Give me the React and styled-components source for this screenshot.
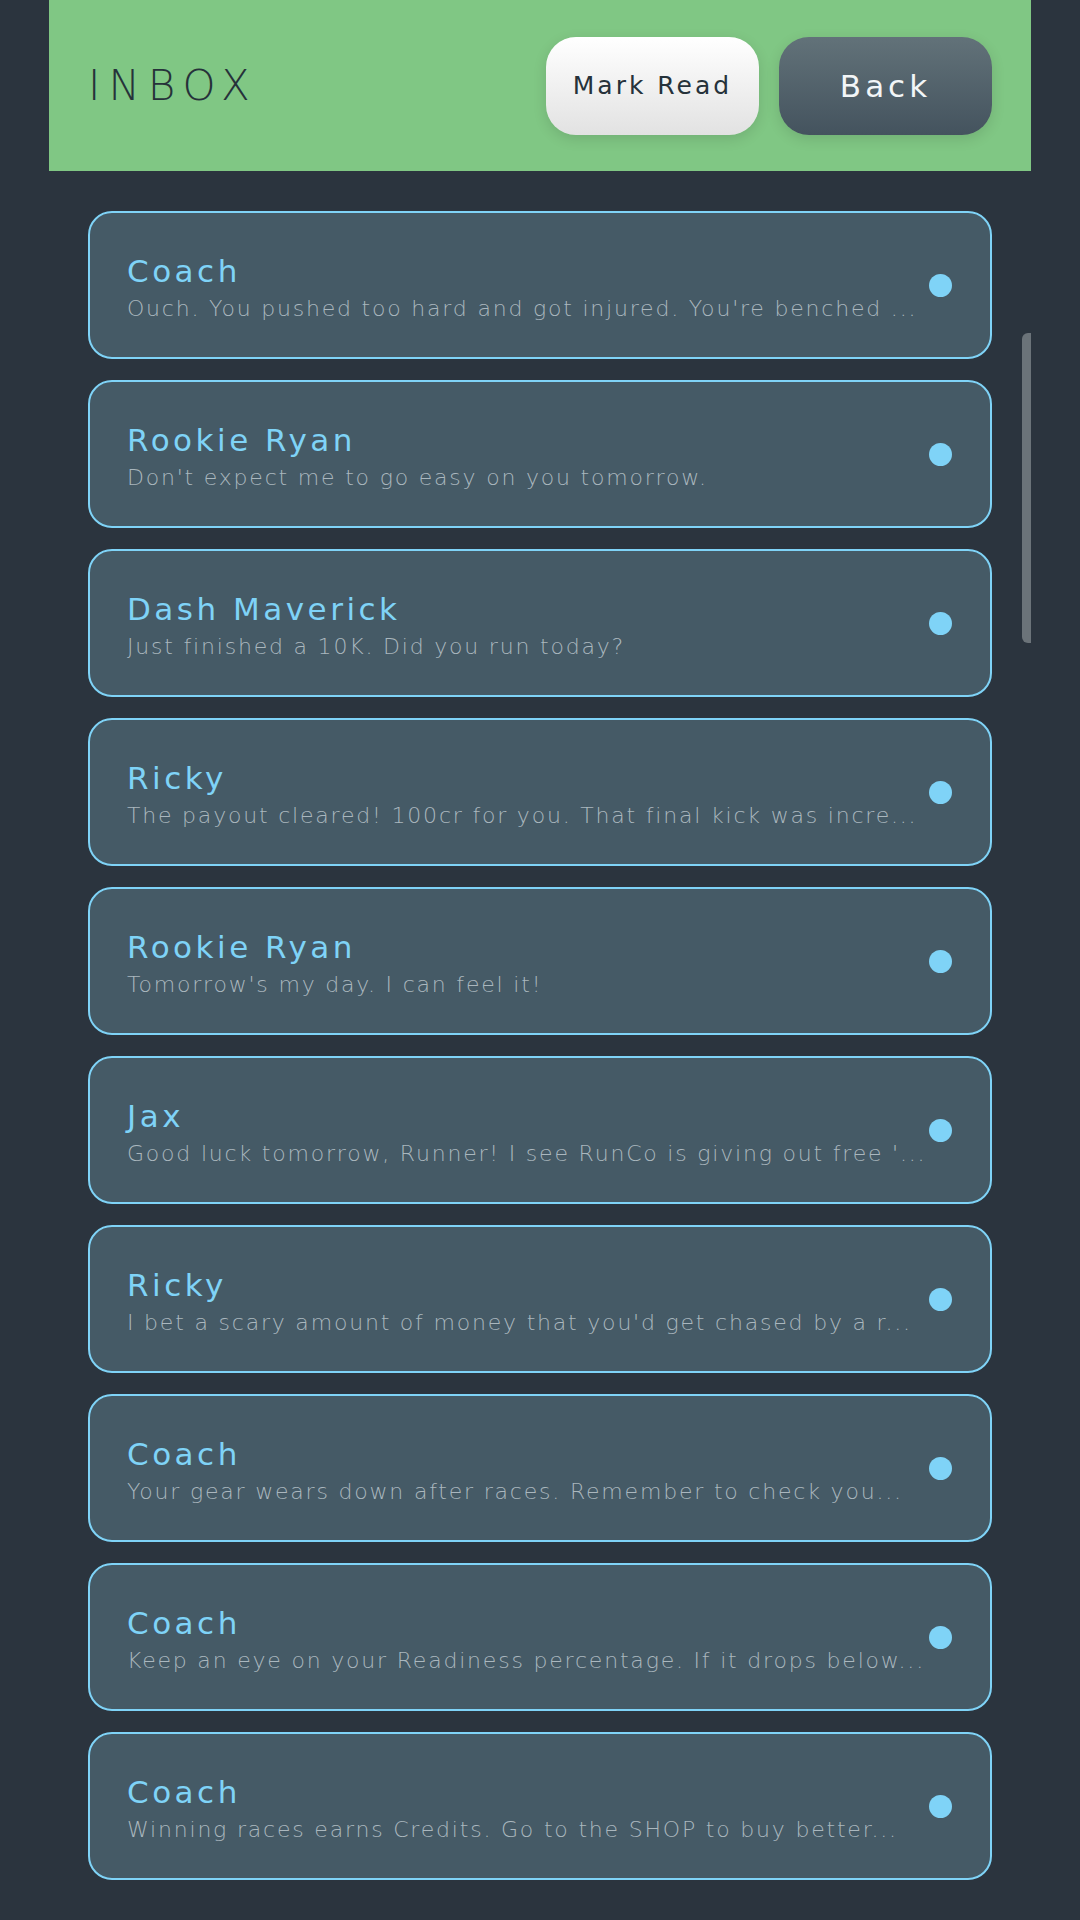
import React from 'react'
import styled, { createGlobalStyle } from 'styled-components'

const GlobalStyle = createGlobalStyle`
  html, body {
    margin: 0;
    padding: 0;
    background: #2b343e;
  }
  body {
    font-family: "DejaVu Sans", "Liberation Sans", sans-serif;
  }
`

const Page = styled.div`
  width: 1080px;
  min-height: 1920px;
  padding: 0 49px;
  box-sizing: border-box;
  position: relative;
`
const Header = styled.header`
  height: 171px;
  background: #80c784;
  display: flex;
  align-items: center;
  justify-content: space-between;
  padding: 0 39px;
`
const Title = styled.h1`
  margin: 0;
  font-size: 42px;
  font-weight: 200;
  letter-spacing: 8px;
  color: #26323a;
`
const Actions = styled.div`
  display: flex;
  gap: 20px;
`
const HeadButton = styled.button`
  width: 213px;
  height: 98px;
  border-radius: 30px;
  border: none;
  padding: 0;
  font-family: "DejaVu Sans", sans-serif;
  font-size: ${({ $large }) => ($large ? '31px' : '25px')};
  letter-spacing: ${({ $large }) => ($large ? '4px' : '3px')};
  color: ${({ $dark }) => ($dark ? '#f2f5f7' : '#26323a')};
  background: ${({ $dark }) =>
    $dark
      ? 'linear-gradient(180deg, #627279 0%, #44535e 100%)'
      : 'linear-gradient(180deg, #ffffff 0%, #e2e2e2 100%)'};
  box-shadow: 0 4px 14px rgba(0, 0, 0, 0.12);
`
const List = styled.div`
  display: flex;
  flex-direction: column;
  gap: 21px;
  padding: 40px 39px;
`
const Card = styled.div`
  height: 148px;
  box-sizing: border-box;
  border: 2px solid #7fd3f7;
  border-radius: 24px;
  background: #455a66;
  display: flex;
  align-items: center;
  padding: 0 38px 0 37px;
  gap: 8px;
`
const Body = styled.div`
  flex: 1;
  min-width: 0;
  display: flex;
  flex-direction: column;
  gap: 4px;
  padding-top: 5px;
`
const Sender = styled.div`
  color: #7fd3f7;
  font-size: 31px;
  letter-spacing: 3.5px;
  line-height: 38px;
`
const Preview = styled.div`
  color: #aab7be;
  font-size: 22px;
  font-weight: 200;
  letter-spacing: 1.8px;
  line-height: 30px;
  white-space: nowrap;
`
const Dot = styled.span`
  width: 23px;
  height: 23px;
  border-radius: 50%;
  background: #7fd3f7;
  flex-shrink: 0;
`
const ScrollThumb = styled.div`
  position: absolute;
  top: 333px;
  right: 49px;
  width: 9px;
  height: 310px;
  border-radius: 6px 0 0 6px;
  background: #6b7379;
`

const messages = [
  { from: 'Coach', text: "Ouch. You pushed too hard and got injured. You're benched ..." },
  { from: 'Rookie Ryan', text: "Don't expect me to go easy on you tomorrow." },
  { from: 'Dash Maverick', text: 'Just finished a 10K. Did you run today?' },
  { from: 'Ricky', text: 'The payout cleared! 100cr for you. That final kick was incre...' },
  { from: 'Rookie Ryan', text: "Tomorrow's my day. I can feel it!" },
  { from: 'Jax', text: "Good luck tomorrow, Runner! I see RunCo is giving out free '..." },
  { from: 'Ricky', text: "I bet a scary amount of money that you'd get chased by a r..." },
  { from: 'Coach', text: 'Your gear wears down after races. Remember to check you...' },
  { from: 'Coach', text: 'Keep an eye on your Readiness percentage. If it drops below...' },
  { from: 'Coach', text: 'Winning races earns Credits. Go to the SHOP to buy better...' },
]

export default function App() {
  return (
    <Page>
      <GlobalStyle />
      <Header>
        <Title>INBOX</Title>
        <Actions>
          <HeadButton>Mark Read</HeadButton>
          <HeadButton $dark $large>Back</HeadButton>
        </Actions>
      </Header>
      <List>
        {messages.map((m, i) => (
          <Card key={i}>
            <Body>
              <Sender>{m.from}</Sender>
              <Preview>{m.text}</Preview>
            </Body>
            <Dot />
          </Card>
        ))}
      </List>
      <ScrollThumb />
    </Page>
  )
}
